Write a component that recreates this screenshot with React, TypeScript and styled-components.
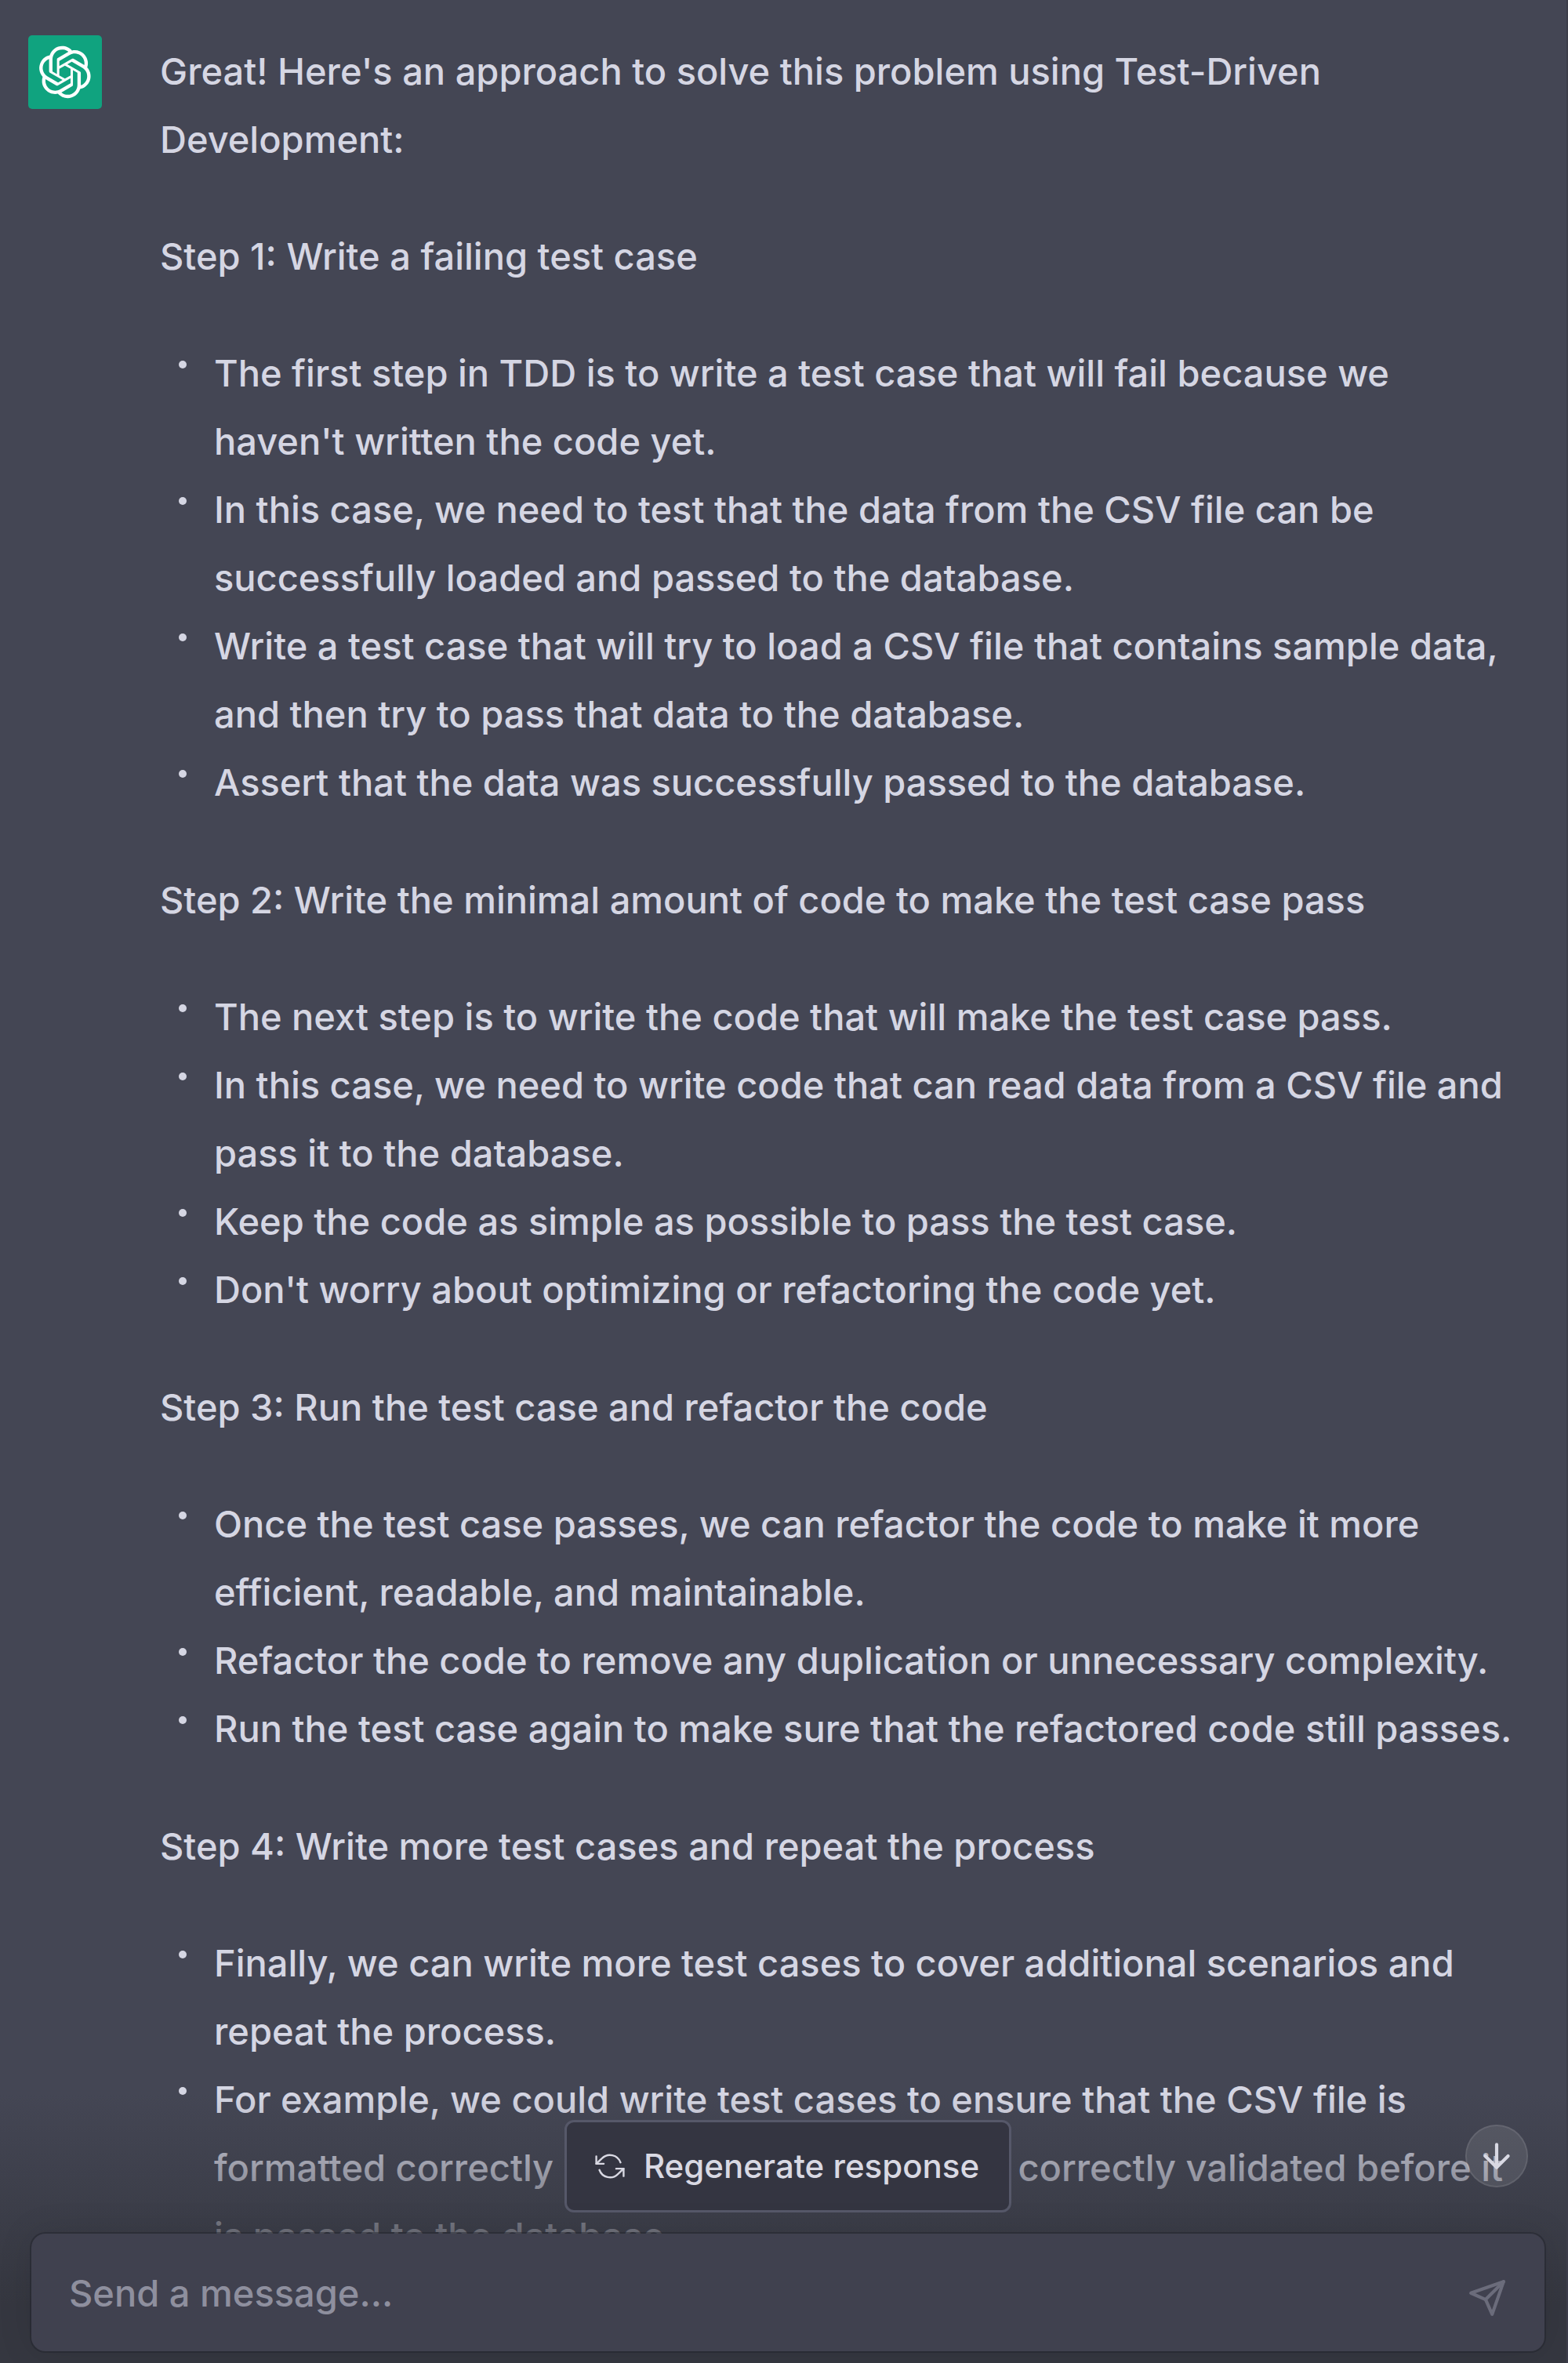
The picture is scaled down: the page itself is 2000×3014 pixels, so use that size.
import React from "react";
import styled, { createGlobalStyle } from "styled-components";

const GlobalStyle = createGlobalStyle`
  *, *::before, *::after { box-sizing: border-box; }
  body {
    margin: 0;
    background: #444654;
    color: #d5d6e3;
    font-family: Inter, "Liberation Sans", sans-serif;
    font-size: 47px;
    font-weight: 450;
    line-height: 87px;
  }
`;

const Chat = styled.main`
  position: relative;
  height: 100vh;
  overflow: hidden;
  background: #444654;
  border-right: 2px solid #3c3d4a;
`;

const Message = styled.article`
  display: flex;
  align-items: flex-start;
  gap: 74px;
  padding: 45px 60px 0 36px;
`;

const Avatar = styled.div`
  display: flex;
  flex: none;
  align-items: center;
  justify-content: center;
  width: 94px;
  height: 94px;
  border-radius: 5px;
  background: #10a37f;
  color: #fff;
`;

const Prose = styled.div`
  flex: 1;
  min-width: 0;
  padding-top: 2px;
`;

const Paragraph = styled.p`
  margin: 0 0 62px;
`;

const List = styled.ul`
  margin: 0 0 63px;
  padding: 0 0 0 24px;
  list-style: none;
`;

const Item = styled.li`
  display: flex;
  align-items: flex-start;
  gap: 35px;

  &::before {
    content: "";
    flex: none;
    width: 10px;
    height: 10px;
    margin-top: 28px;
    border-radius: 50%;
    background: currentColor;
  }
`;

const Footer = styled.footer`
  position: absolute;
  inset: auto 0 0;
  display: flex;
  flex-direction: column;
  align-items: center;
  gap: 27px;
  padding: 34px 28px 15px 40px;
  background: linear-gradient(180deg, rgba(53, 55, 64, 0), #353740 78%);
`;

const RegenerateButton = styled.button`
  display: flex;
  align-items: center;
  gap: 24px;
  height: 118px;
  padding: 0 38px 0 36px;
  border: 3px solid #565869;
  border-radius: 12px;
  background: #343541;
  color: #d9d9e3;
  font: 500 42px/62px Inter, "Liberation Sans", sans-serif;
`;

const Composer = styled.form`
  display: flex;
  align-items: center;
  width: 100%;
  height: 150px;
  padding: 0 40px 0 48px;
  border-radius: 18px;
  background: #40414f;
  box-shadow: 0 0 0 2px rgba(32, 33, 43, 0.45), 0 0 46px rgba(0, 0, 0, 0.1);
`;

const MessageInput = styled.input`
  flex: 1;
  min-width: 0;
  height: 87px;
  padding: 0;
  border: 0;
  outline: 0;
  background: transparent;
  color: inherit;
  font: inherit;

  &::placeholder {
    color: #8e8f9e;
    opacity: 1;
  }
`;

const SendButton = styled.button`
  display: flex;
  padding: 14px 8px 0;
  border: 0;
  background: transparent;
  color: #6b6c7b;
`;

const ScrollButton = styled.button`
  position: absolute;
  right: 49px;
  bottom: 224px;
  display: flex;
  align-items: center;
  justify-content: center;
  width: 80px;
  height: 80px;
  padding: 0;
  border: 2px solid rgba(255, 255, 255, 0.18);
  border-radius: 50%;
  background: rgba(255, 255, 255, 0.1);
  background-clip: padding-box;
  color: #d9d9e3;
`;

const LineIcon = styled.svg`
  display: block;
  fill: none;
  stroke: currentColor;
  stroke-linecap: round;
  stroke-linejoin: round;
`;

function Logo() {
  return (
    <svg width="68" height="68" viewBox="0 0 41 41" fill="currentColor" aria-hidden="true">
      <path d="M37.5324 16.8707C37.9808 15.5241 38.1363 14.0974 37.9886 12.6859C37.8409 11.2744 37.3934 9.91076 36.676 8.68622C35.6126 6.83404 33.9882 5.3676 32.0373 4.4985C30.0864 3.62941 27.9098 3.40259 25.8215 3.85078C24.8796 2.7893 23.7219 1.94125 22.4257 1.36341C21.1295 0.785575 19.7249 0.491269 18.3058 0.500197C16.1708 0.495044 14.0893 1.16803 12.3614 2.42214C10.6335 3.67624 9.34853 5.44666 8.6917 7.47815C7.30085 7.76286 5.98686 8.3414 4.8377 9.17505C3.68854 10.0087 2.73073 11.0782 2.02839 12.312C0.956464 14.1591 0.498905 16.2988 0.721698 18.4228C0.944492 20.5467 1.83612 22.5449 3.268 24.1293C2.81966 25.4759 2.66413 26.9026 2.81182 28.3141C2.95951 29.7256 3.40701 31.0892 4.12437 32.3138C5.18791 34.1659 6.8123 35.6322 8.76321 36.5013C10.7141 37.3704 12.8907 37.5973 14.9789 37.1492C15.9208 38.2107 17.0786 39.0587 18.3747 39.6366C19.6709 40.2144 21.0755 40.5087 22.4946 40.4998C24.6307 40.5054 26.7133 39.8321 28.4418 38.5772C30.1704 37.3223 31.4556 35.5506 32.1119 33.5179C33.5027 33.2332 34.8167 32.6547 35.9659 31.821C37.115 30.9874 38.0728 29.9178 38.7752 28.684C39.8458 26.8371 40.3023 24.6979 40.0789 22.5748C39.8556 20.4517 38.9639 18.4544 37.5324 16.8707ZM22.4978 37.8849C20.7443 37.8874 19.0459 37.2733 17.6994 36.1501C17.7601 36.117 17.8666 36.0586 17.936 36.0161L25.9004 31.4156C26.1003 31.3019 26.2663 31.137 26.3813 30.9378C26.4964 30.7386 26.5563 30.5124 26.5549 30.2825V19.0542L29.9213 20.998C29.9389 21.0068 29.9541 21.0198 29.9656 21.0359C29.977 21.052 29.9842 21.0707 29.9867 21.0902V30.3889C29.9842 32.375 29.1946 34.2791 27.7909 35.6841C26.3872 37.0892 24.4838 37.8806 22.4978 37.8849ZM6.39227 31.0064C5.51397 29.4888 5.19742 27.7107 5.49804 25.9832C5.55718 26.0187 5.66048 26.0818 5.73461 26.1244L13.699 30.7248C13.8975 30.8408 14.1233 30.902 14.3532 30.902C14.583 30.902 14.8088 30.8408 15.0073 30.7248L24.731 25.1103V28.9979C24.7321 29.0177 24.7283 29.0376 24.7199 29.0556C24.7115 29.0736 24.6988 29.0893 24.6829 29.1012L16.6317 33.7497C14.9096 34.7416 12.8643 35.0097 10.9447 34.4954C9.02506 33.9811 7.38785 32.7263 6.39227 31.0064ZM4.29707 13.6194C5.17156 12.0998 6.55279 10.9364 8.19885 10.3327C8.19885 10.4013 8.19491 10.5228 8.19491 10.6071V19.808C8.19351 20.0378 8.25334 20.2638 8.36823 20.4629C8.48312 20.6619 8.64893 20.8267 8.84863 20.9404L18.5723 26.5542L15.206 28.4979C15.1894 28.5089 15.1703 28.5155 15.1505 28.5173C15.1307 28.5191 15.1107 28.516 15.0924 28.5082L7.04046 23.8557C5.32135 22.8601 4.06716 21.2235 3.55289 19.3046C3.03862 17.3858 3.30624 15.3413 4.29707 13.6194ZM31.955 20.0556L22.2312 14.4411L25.5976 12.4981C25.6142 12.4872 25.6333 12.4805 25.6531 12.4787C25.6729 12.4769 25.6928 12.4801 25.7111 12.4879L33.7631 17.1364C34.9967 17.849 36.0017 18.8982 36.6606 20.1613C37.3194 21.4244 37.6047 22.849 37.4832 24.2684C37.3617 25.6878 36.8382 27.0432 35.9743 28.1759C35.1103 29.3086 33.9415 30.1717 32.6047 30.6641C32.6047 30.5947 32.6047 30.4733 32.6047 30.3889V21.188C32.6066 20.9586 32.5474 20.7328 32.4332 20.5338C32.319 20.3348 32.154 20.1698 31.955 20.0556ZM35.3055 15.0128C35.2464 14.9765 35.1431 14.9142 35.069 14.8717L27.1045 10.2712C26.906 10.1554 26.6803 10.0943 26.4504 10.0943C26.2206 10.0943 25.9948 10.1554 25.7963 10.2712L16.0726 15.8858V11.9982C16.0715 11.9783 16.0753 11.9585 16.0837 11.9405C16.0921 11.9225 16.1048 11.9068 16.1207 11.8949L24.1719 7.25025C25.4053 6.53903 26.8158 6.19376 28.2383 6.25482C29.6608 6.31589 31.0364 6.78077 32.2044 7.59508C33.3723 8.40939 34.2842 9.53945 34.8334 10.8531C35.3826 12.1667 35.5464 13.6095 35.3055 15.0128ZM14.2424 21.9419L10.8752 19.9981C10.8576 19.9893 10.8423 19.9763 10.8309 19.9602C10.8195 19.9441 10.8122 19.9254 10.8098 19.9058V10.6071C10.8107 9.18295 11.2173 7.78848 11.9819 6.58696C12.7466 5.38544 13.8377 4.42659 15.1275 3.82264C16.4173 3.21869 17.8524 2.99464 19.2649 3.1767C20.6775 3.35876 22.0089 3.93941 23.1034 4.85067C23.0427 4.88379 22.937 4.94215 22.8668 4.98473L14.9024 9.58517C14.7025 9.69878 14.5366 9.86356 14.4215 10.0626C14.3065 10.2616 14.2466 10.4877 14.2479 10.7175L14.2424 21.9419ZM16.071 17.9991L20.4018 15.4978L24.7325 17.9975V22.9985L20.4018 25.4983L16.071 22.9985V17.9991Z" />
    </svg>
  );
}

const steps = [
  {
    title: "Step 1: Write a failing test case",
    items: [
      "The first step in TDD is to write a test case that will fail because we haven't written the code yet.",
      "In this case, we need to test that the data from the CSV file can be successfully loaded and passed to the database.",
      "Write a test case that will try to load a CSV file that contains sample data, and then try to pass that data to the database.",
      "Assert that the data was successfully passed to the database.",
    ],
  },
  {
    title: "Step 2: Write the minimal amount of code to make the test case pass",
    items: [
      "The next step is to write the code that will make the test case pass.",
      "In this case, we need to write code that can read data from a CSV file and pass it to the database.",
      "Keep the code as simple as possible to pass the test case.",
      "Don't worry about optimizing or refactoring the code yet.",
    ],
  },
  {
    title: "Step 3: Run the test case and refactor the code",
    items: [
      "Once the test case passes, we can refactor the code to make it more efficient, readable, and maintainable.",
      "Refactor the code to remove any duplication or unnecessary complexity.",
      "Run the test case again to make sure that the refactored code still passes.",
    ],
  },
  {
    title: "Step 4: Write more test cases and repeat the process",
    items: [
      "Finally, we can write more test cases to cover additional scenarios and repeat the process.",
      "For example, we could write test cases to ensure that the CSV file is formatted correctly and that the data is being correctly validated before it is passed to the database.",
    ],
  },
];

export default function App() {
  return (
    <>
      <GlobalStyle />
      <Chat>
        <Message>
          <Avatar>
            <Logo />
          </Avatar>
          <Prose>
            <Paragraph>
              Great! Here's an approach to solve this problem using Test-Driven Development:
            </Paragraph>
            {steps.map((step) => (
              <React.Fragment key={step.title}>
                <Paragraph>{step.title}</Paragraph>
                <List>
                  {step.items.map((item) => (
                    <Item key={item}>
                      <span>{item}</span>
                    </Item>
                  ))}
                </List>
              </React.Fragment>
            ))}
          </Prose>
        </Message>
        <Footer>
          <RegenerateButton type="button">
            <LineIcon width="38" height="38" viewBox="0 0 24 24" strokeWidth="1.5" aria-hidden="true">
              <polyline points="1 4 1 10 7 10" />
              <polyline points="23 20 23 14 17 14" />
              <path d="M20.49 9A9 9 0 0 0 5.64 5.64L1 10m22 4l-4.64 4.36A9 9 0 0 1 3.51 15" />
            </LineIcon>
            Regenerate response
          </RegenerateButton>
          <Composer onSubmit={(event) => event.preventDefault()}>
            <MessageInput type="text" placeholder="Send a message..." aria-label="Send a message" />
            <SendButton type="submit" aria-label="Send">
              <LineIcon width="50" height="50" viewBox="0 0 24 24" strokeWidth="2" aria-hidden="true">
                <line x1="22" y1="2" x2="11" y2="13" />
                <polygon points="22 2 15 22 11 13 2 9 22 2" />
              </LineIcon>
            </SendButton>
          </Composer>
        </Footer>
        <ScrollButton type="button" aria-label="Scroll to bottom">
          <LineIcon width="50" height="50" viewBox="0 0 24 24" strokeWidth="2" aria-hidden="true">
            <line x1="12" y1="5" x2="12" y2="19" />
            <polyline points="19 12 12 19 5 12" />
          </LineIcon>
        </ScrollButton>
      </Chat>
    </>
  );
}
